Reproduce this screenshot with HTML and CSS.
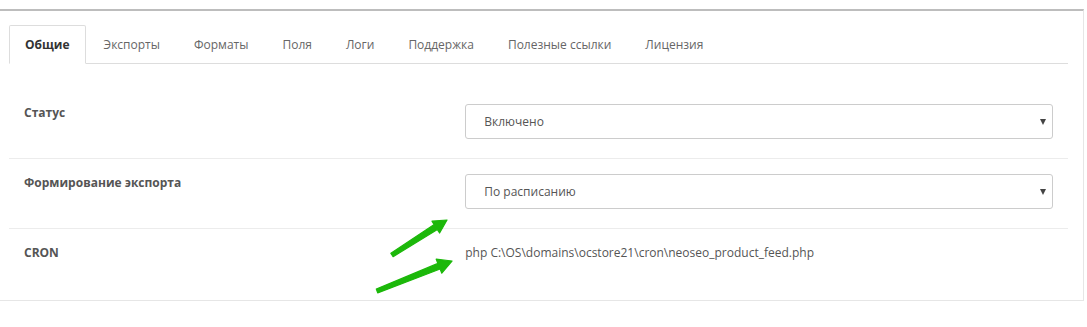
FILE: index.html
```html
<!DOCTYPE html>
<html lang="ru">
<head>
	<meta charset="UTF-8">
	<title>Экспорт</title>
	<link rel="stylesheet" href="styles.css">
</head>
<body>
	<div class="page">
		<div class="panel">
			<ul class="tabs">
				<li class="select"><a href="#">Общие</a></li>
				<li><a href="#">Экспорты</a></li>
				<li><a href="#">Форматы</a></li>
				<li><a href="#">Поля</a></li>
				<li><a href="#">Логи</a></li>
				<li><a href="#">Поддержка</a></li>
				<li><a href="#">Полезные ссылки</a></li>
				<li><a href="#">Лицензия</a></li>
			</ul>
			<div class="tab-content">
				<div class="form-row first">
					<div class="label">Статус</div>
					<div class="control">
						<div class="select-box">Включено</div>
					</div>
				</div>
				<div class="form-row">
					<div class="label">Формирование экспорта</div>
					<div class="control">
						<div class="select-box">По расписанию</div>
					</div>
				</div>
				<div class="form-row last">
					<div class="label">CRON</div>
					<div class="control">
						<div class="static">php C:\OS\domains\ocstore21\cron\neoseo_product_feed.php</div>
					</div>
				</div>
			</div>
		</div>
		<!-- стрелки-пометки поверх скриншота -->
		<svg class="marks" width="1087" height="327" viewBox="0 0 1087 327">
			<g fill="#1cb80a" stroke="#1cb80a" stroke-width="1.2" stroke-linejoin="round">
				<polygon points="390.9,244.3 393.1,247.7 437.4,220.6 439.6,224 447,211 432,212.2 434.2,215.6"/>
				<polygon points="376.3,280.1 377.7,283.9 440.1,260 441.8,264.2 452,252 436.2,250.2 437.9,254.4"/>
			</g>
		</svg>
	</div>
</body>
</html>
```

FILE: styles.css
```css
*{
	margin: 0;
	padding: 0;
	box-sizing: border-box;
}
body{
	background: #fff;
	font-family: "Open Sans", "Liberation Sans", sans-serif;
	font-size: 12px;
	color: #555;
}
.page{
	position: relative;
	width: 1087px;
	height: 327px;
}
.panel{
	width: 1084px;
	margin-top: 9px;
	padding: 14px 15px 0 9px;
	border-top: 2px solid #bdbdbd;
	border-right: 1px solid #e6e6e6;
	border-bottom: 1px solid #e6e6e6;
}
.tabs{
	display: flex;
	list-style: none;
	border-bottom: 1px solid #ddd;
}
.tabs li{
	margin-right: 2px;
	margin-bottom: -1px;
}
.tabs a{
	display: block;
	padding: 10px 15px;
	line-height: 17px;
	border: 1px solid transparent;
	border-radius: 2px 2px 0 0;
	color: #666;
	text-decoration: none;
}
.tabs li.select a{
	background: #fff;
	border-color: #ddd #ddd transparent;
	color: #333;
	font-weight: bold;
}
.form-row{
	display: grid;
	grid-template-columns: 5fr 7fr;
	padding: 15px 0 19px;
	border-bottom: 1px solid #ececec;
}
.form-row.first{
	padding-top: 40px;
}
.form-row.last{
	padding-bottom: 38px;
	border-bottom: none;
}
.label,
.control{
	padding: 0 15px;
}
.label{
	line-height: 18px;
	font-weight: bold;
	color: #555;
}
.select-box{
	position: relative;
	height: 35px;
	padding: 0 18px;
	line-height: 33px;
	border: 1px solid #ccc;
	border-radius: 3px;
	color: #555;
}
.select-box::after{
	content: "";
	position: absolute;
	right: 6px;
	top: 14px;
	border-left: 3px solid transparent;
	border-right: 3px solid transparent;
	border-top: 6px solid #444;
}
.static{
	line-height: 18px;
	color: #555;
}
.marks{
	position: absolute;
	left: 0;
	top: 0;
	pointer-events: none;
}
```
